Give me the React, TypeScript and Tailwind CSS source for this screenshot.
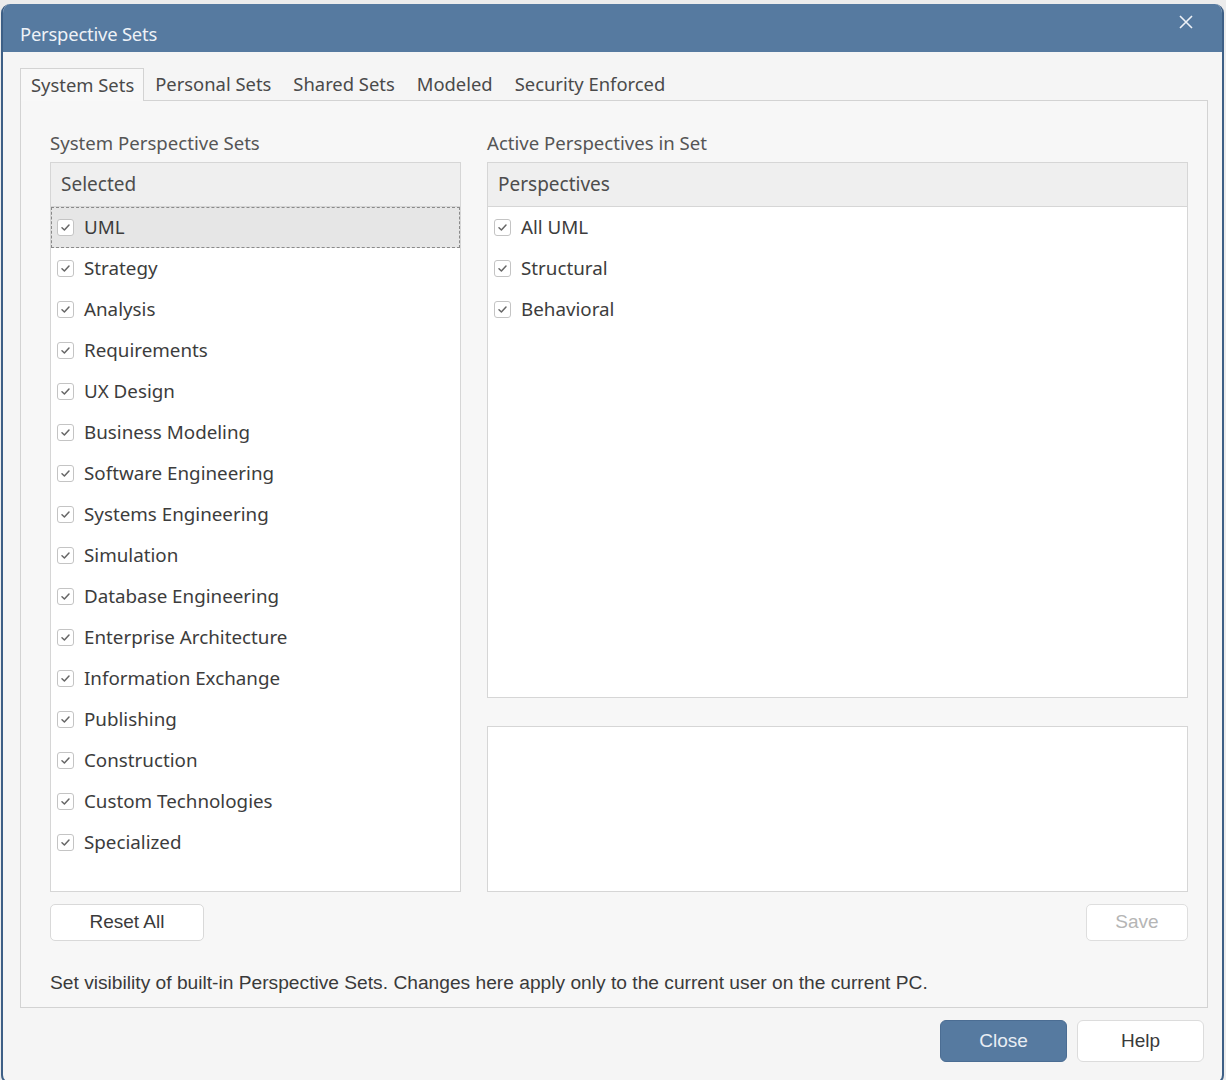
import React from "react";

const left = [
  "UML","Strategy","Analysis","Requirements","UX Design","Business Modeling","Software Engineering","Systems Engineering","Simulation","Database Engineering","Enterprise Architecture","Information Exchange","Publishing","Construction","Custom Technologies","Specialized",
];
const right = ["All UML", "Structural", "Behavioral"];

function Check() {
  return (
    <span className="flex h-[17px] w-[17px] shrink-0 items-center justify-center rounded-[3px] border border-[#c4c4c4] bg-white">
      <svg width="11" height="11" viewBox="0 0 11 11">
        <path d="M2 5.8 L4.4 8 L9 3" fill="none" stroke="#666" strokeWidth="1.5" strokeLinecap="round" strokeLinejoin="round" />
      </svg>
    </span>
  );
}

function Row({ label, selected }: { label: string; selected?: boolean }) {
  return (
    <div
      className={
        "flex h-[41px] shrink-0 items-center gap-[10px] pl-[5px]" +
        (selected ? " border border-dashed border-[#8a8a8a] bg-[#e6e6e6]" : " border border-transparent")
      }
    >
      <Check />
      <span className="text-[18.8px] text-[#3c3c3c]">{label}</span>
    </div>
  );
}

export default function App() {
  const ui = { fontFamily: '"Noto Sans", "Open Sans", sans-serif' };
  const arial = { fontFamily: '"Liberation Sans", Arial, sans-serif' };
  return (
    <div className="h-[1080px] w-[1226px] overflow-hidden bg-[#ececec] pt-[4px] pl-[1px]" style={ui}>
      <div className="flex h-[1080px] w-[1223px] flex-col overflow-hidden rounded-t-[9px] rounded-b-[9px] border-x-[2px] border-b-[2px] border-[#3d5f86] bg-[#f5f5f5]">
        <div className="flex h-[48px] shrink-0 items-start justify-between bg-[#567aa0] pl-[17px] pr-[28px]">
          <span className="pt-[17px] text-[18.4px] leading-[26px] tracking-[-0.2px] text-[#eef2f7]">Perspective Sets</span>
          <svg width="16" height="16" viewBox="0 0 16 16" className="mt-[10px]">
            <path d="M2 2 L14 14 M14 2 L2 14" stroke="#eef2f7" strokeWidth="1.6" />
          </svg>
        </div>
        <div className="px-[17px] pt-[16px]">
          <div className="flex h-[32px] items-end text-[18.4px] text-[#4a4a4a]">
            <div className="relative z-10 -mb-px flex h-[33px] items-center border border-b-0 border-[#d3d3d3] bg-[#f8f8f8] pl-[10px] pr-[9px]">System Sets</div>
            <div className="flex h-[32px] items-center px-[11px]">Personal Sets</div>
            <div className="flex h-[32px] items-center px-[11px]">Shared Sets</div>
            <div className="flex h-[32px] items-center px-[11px]">Modeled</div>
            <div className="flex h-[32px] items-center px-[11px]">Security Enforced</div>
          </div>
          <div className="flex h-[908px] w-[1188px] flex-col border border-[#d3d3d3] bg-[#f7f7f7] pl-[29px] pr-[19px] pt-[31px]">
            <div className="flex h-[760px] gap-[26px]">
              <div className="flex w-[411px] flex-col">
                <div className="h-[30px] text-[18.6px] leading-[22px] text-[#555]">System Perspective Sets</div>
                <div className="flex flex-1 flex-col border border-[#d6d6d6] bg-white">
                  <div className="flex h-[44px] shrink-0 items-center border-b border-[#d6d6d6] bg-[#efefef] pl-[10px] text-[19px] text-[#4d4d4d]">Selected</div>
                  {left.map((l, i) => (
                    <Row key={l} label={l} selected={i === 0} />
                  ))}
                </div>
              </div>
              <div className="flex flex-1 flex-col">
                <div className="h-[30px] text-[18.6px] leading-[22px] text-[#555]">Active Perspectives in Set</div>
                <div className="flex h-[536px] flex-col border border-[#d6d6d6] bg-white">
                  <div className="flex h-[44px] shrink-0 items-center border-b border-[#d6d6d6] bg-[#efefef] pl-[10px] text-[19px] text-[#4d4d4d]">Perspectives</div>
                  {right.map((l) => (
                    <Row key={l} label={l} />
                  ))}
                </div>
                <div className="mt-[28px] flex-1 border border-[#d6d6d6] bg-white"></div>
              </div>
            </div>
            <div className="mt-[12px] flex justify-between" style={arial}>
              <button className="h-[37px] w-[154px] rounded-[5px] border border-[#d9d9d9] bg-white text-[19px] text-[#3a3a3a]">Reset All</button>
              <button className="h-[37px] w-[102px] rounded-[5px] border border-[#dedede] bg-white text-[19px] text-[#b5b5b5]">Save</button>
            </div>
            <div className="mt-[28px] text-[19.2px] text-[#3a3a3a]" style={arial}>
              Set visibility of built-in Perspective Sets. Changes here apply only to the current user on the current PC.
            </div>
          </div>
          <div className="mt-[12px] flex justify-end gap-[10px] pr-[1px]" style={arial}>
            <button className="h-[42px] w-[127px] rounded-[6px] border border-[#4b6d93] bg-[#567aa0] text-[19px] text-[#e9eef4]">Close</button>
            <button className="h-[42px] w-[127px] rounded-[6px] border border-[#dcdcdc] bg-white text-[19px] text-[#3a3a3a]">Help</button>
          </div>
        </div>
      </div>
    </div>
  );
}
